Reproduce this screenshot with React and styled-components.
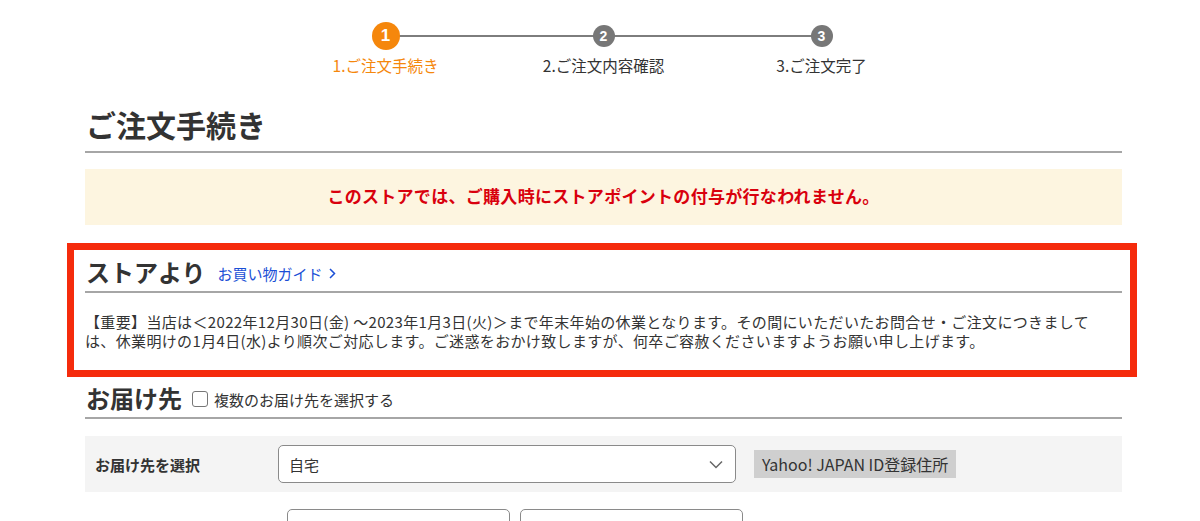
import React from "react";
import styled, { createGlobalStyle } from "styled-components";

const Global = createGlobalStyle`
  html, body { margin: 0; padding: 0; background: #fff; }
  body {
    font-family: "Noto Sans CJK JP", "Noto Sans", "Liberation Sans", sans-serif;
    color: #333;
    width: 1200px;
    overflow: hidden;
  }
`;

const Page = styled.div`
  width: 1037px;
  padding: 0 78px 0 85px;
`;

const Stepper = styled.ol`
  list-style: none;
  margin: 0;
  padding: 22px 0 0;
  display: flex;
  justify-content: center;
`;

const Step = styled.li`
  position: relative;
  width: 218px;
  display: flex;
  flex-direction: column;
  align-items: center;
  &:not(:last-child)::before {
    content: "";
    position: absolute;
    left: 50%;
    top: 13px;
    width: 100%;
    height: 2px;
    background: #7d7d7d;
  }
`;

const CircleSlot = styled.div`
  height: 28px;
  display: flex;
  align-items: center;
  justify-content: center;
  position: relative;
  z-index: 1;
`;

const Circle = styled.span`
  width: ${(p) => (p.$active ? 28 : 22)}px;
  height: ${(p) => (p.$active ? 28 : 22)}px;
  border-radius: 50%;
  background: ${(p) => (p.$active ? "#f5870c" : "#777")};
  color: #fff;
  font-family: "Liberation Sans", sans-serif;
  font-weight: 700;
  font-size: ${(p) => (p.$active ? 17 : 14)}px;
  display: flex;
  align-items: center;
  justify-content: center;
`;

const StepLabel = styled.span`
  margin-top: 4px;
  font-size: 15.5px;
  line-height: 22px;
  color: ${(p) => (p.$active ? "#f5870c" : "#333")};
`;

const Title = styled.h1`
  margin: 28px 0 0;
  padding: 0 0 7px 1px;
  font-size: 30px;
  line-height: 40px;
  font-weight: 700;
  color: #333;
  border-bottom: 2px solid #a6a6a6;
`;

const Notice = styled.div`
  box-sizing: border-box;
  margin-top: 16px;
  height: 56px;
  padding-bottom: 3px;
  background: #fdf5e0;
  display: flex;
  align-items: center;
  justify-content: center;
  color: #d9000d;
  font-weight: 700;
  font-size: 17px;
  letter-spacing: 0.3px;
`;

const Highlight = styled.section`
  margin: 18px -15px 0 -18px;
  border: 7px solid #f52b0c;
  padding: 6px 8px 20px 11px;
`;

const SectionHead = styled.div`
  display: flex;
  align-items: center;
  gap: 12px;
  padding: 0 0 3px 1px;
  border-bottom: 2px solid #a6a6a6;
`;

const SectionTitle = styled.h2`
  margin: 0;
  font-size: 24px;
  line-height: 32px;
  font-weight: 700;
  color: #333;
`;

const GuideLink = styled.a`
  color: #1b4fd6;
  font-size: 15px;
  text-decoration: none;
  display: inline-flex;
  align-items: center;
  gap: 6px;
  margin-top: 2px;
`;

const Body = styled.p`
  margin: 19px 0 0;
  font-size: 15px;
  line-height: 19px;
  letter-spacing: 0.35px;
  color: #333;
`;

const DeliveryHead = styled(SectionHead)`
  margin-top: 5px;
  gap: 10px;
`;

const CheckLabel = styled.label`
  display: inline-flex;
  align-items: center;
  gap: 6px;
  font-size: 15px;
  color: #333;
  margin-top: 2px;
`;

const Box = styled.span`
  width: 14px;
  height: 14px;
  border: 1.5px solid #777;
  border-radius: 3px;
  background: #fff;
`;

const FormRow = styled.div`
  margin-top: 17px;
  display: flex;
  align-items: center;
  background: ${(p) => (p.$shaded ? "#f4f4f4" : "transparent")};
  padding: ${(p) => (p.$shaded ? "9px 10px" : "0 0 0 202px")};
`;

const RowLabel = styled.span`
  width: 183px;
  font-size: 15px;
  font-weight: 700;
  color: #333;
`;

const Select = styled.div`
  box-sizing: border-box;
  width: 458px;
  height: 38px;
  border: 1px solid #8a8a8a;
  border-radius: 5px;
  background: #fff;
  display: flex;
  align-items: center;
  justify-content: space-between;
  padding: 0 12px 0 10px;
  font-size: 15px;
  color: #333;
`;

const Badge = styled.span`
  margin-left: 18px;
  height: 28px;
  padding: 0 8px;
  background: #cfcfcf;
  display: flex;
  align-items: center;
  font-size: 16px;
  color: #333;
`;

const Input = styled.div`
  box-sizing: border-box;
  width: 223px;
  height: 38px;
  border: 1px solid #8a8a8a;
  border-radius: 5px;
  background: #fff;
  & + & { margin-left: 10px; }
`;

export default function App() {
  return (
    <>
      <Global />
      <Page>
        <Stepper>
          <Step>
            <CircleSlot><Circle $active>1</Circle></CircleSlot>
            <StepLabel $active>1.ご注文手続き</StepLabel>
          </Step>
          <Step>
            <CircleSlot><Circle>2</Circle></CircleSlot>
            <StepLabel>2.ご注文内容確認</StepLabel>
          </Step>
          <Step>
            <CircleSlot><Circle>3</Circle></CircleSlot>
            <StepLabel>3.ご注文完了</StepLabel>
          </Step>
        </Stepper>

        <Title>ご注文手続き</Title>

        <Notice>このストアでは、ご購入時にストアポイントの付与が行なわれません。</Notice>

        <Highlight>
          <SectionHead>
            <SectionTitle>ストアより</SectionTitle>
            <GuideLink href="#">
              お買い物ガイド
              <svg width="7" height="11" viewBox="0 0 7 11">
                <polyline points="1,1 5.5,5.5 1,10" fill="none" stroke="#1b4fd6" strokeWidth="1.5" />
              </svg>
            </GuideLink>
          </SectionHead>
          <Body>
            【重要】当店は＜2022年12月30日(金) 〜2023年1月3日(火)＞まで年末年始の休業となります。その間にいただいたお問合せ・ご注文につきまして
            <br />
            は、休業明けの1月4日(水)より順次ご対応します。ご迷惑をおかけ致しますが、何卒ご容赦くださいますようお願い申し上げます。
          </Body>
        </Highlight>

        <DeliveryHead>
          <SectionTitle>お届け先</SectionTitle>
          <CheckLabel>
            <Box />
            複数のお届け先を選択する
          </CheckLabel>
        </DeliveryHead>

        <FormRow $shaded>
          <RowLabel>お届け先を選択</RowLabel>
          <Select>
            自宅
            <svg width="14" height="9" viewBox="0 0 14 9">
              <polyline points="1,1.5 7,7.5 13,1.5" fill="none" stroke="#666" strokeWidth="1.5" />
            </svg>
          </Select>
          <Badge>Yahoo! JAPAN ID登録住所</Badge>
        </FormRow>

        <FormRow>
          <Input />
          <Input />
        </FormRow>
      </Page>
    </>
  );
}
